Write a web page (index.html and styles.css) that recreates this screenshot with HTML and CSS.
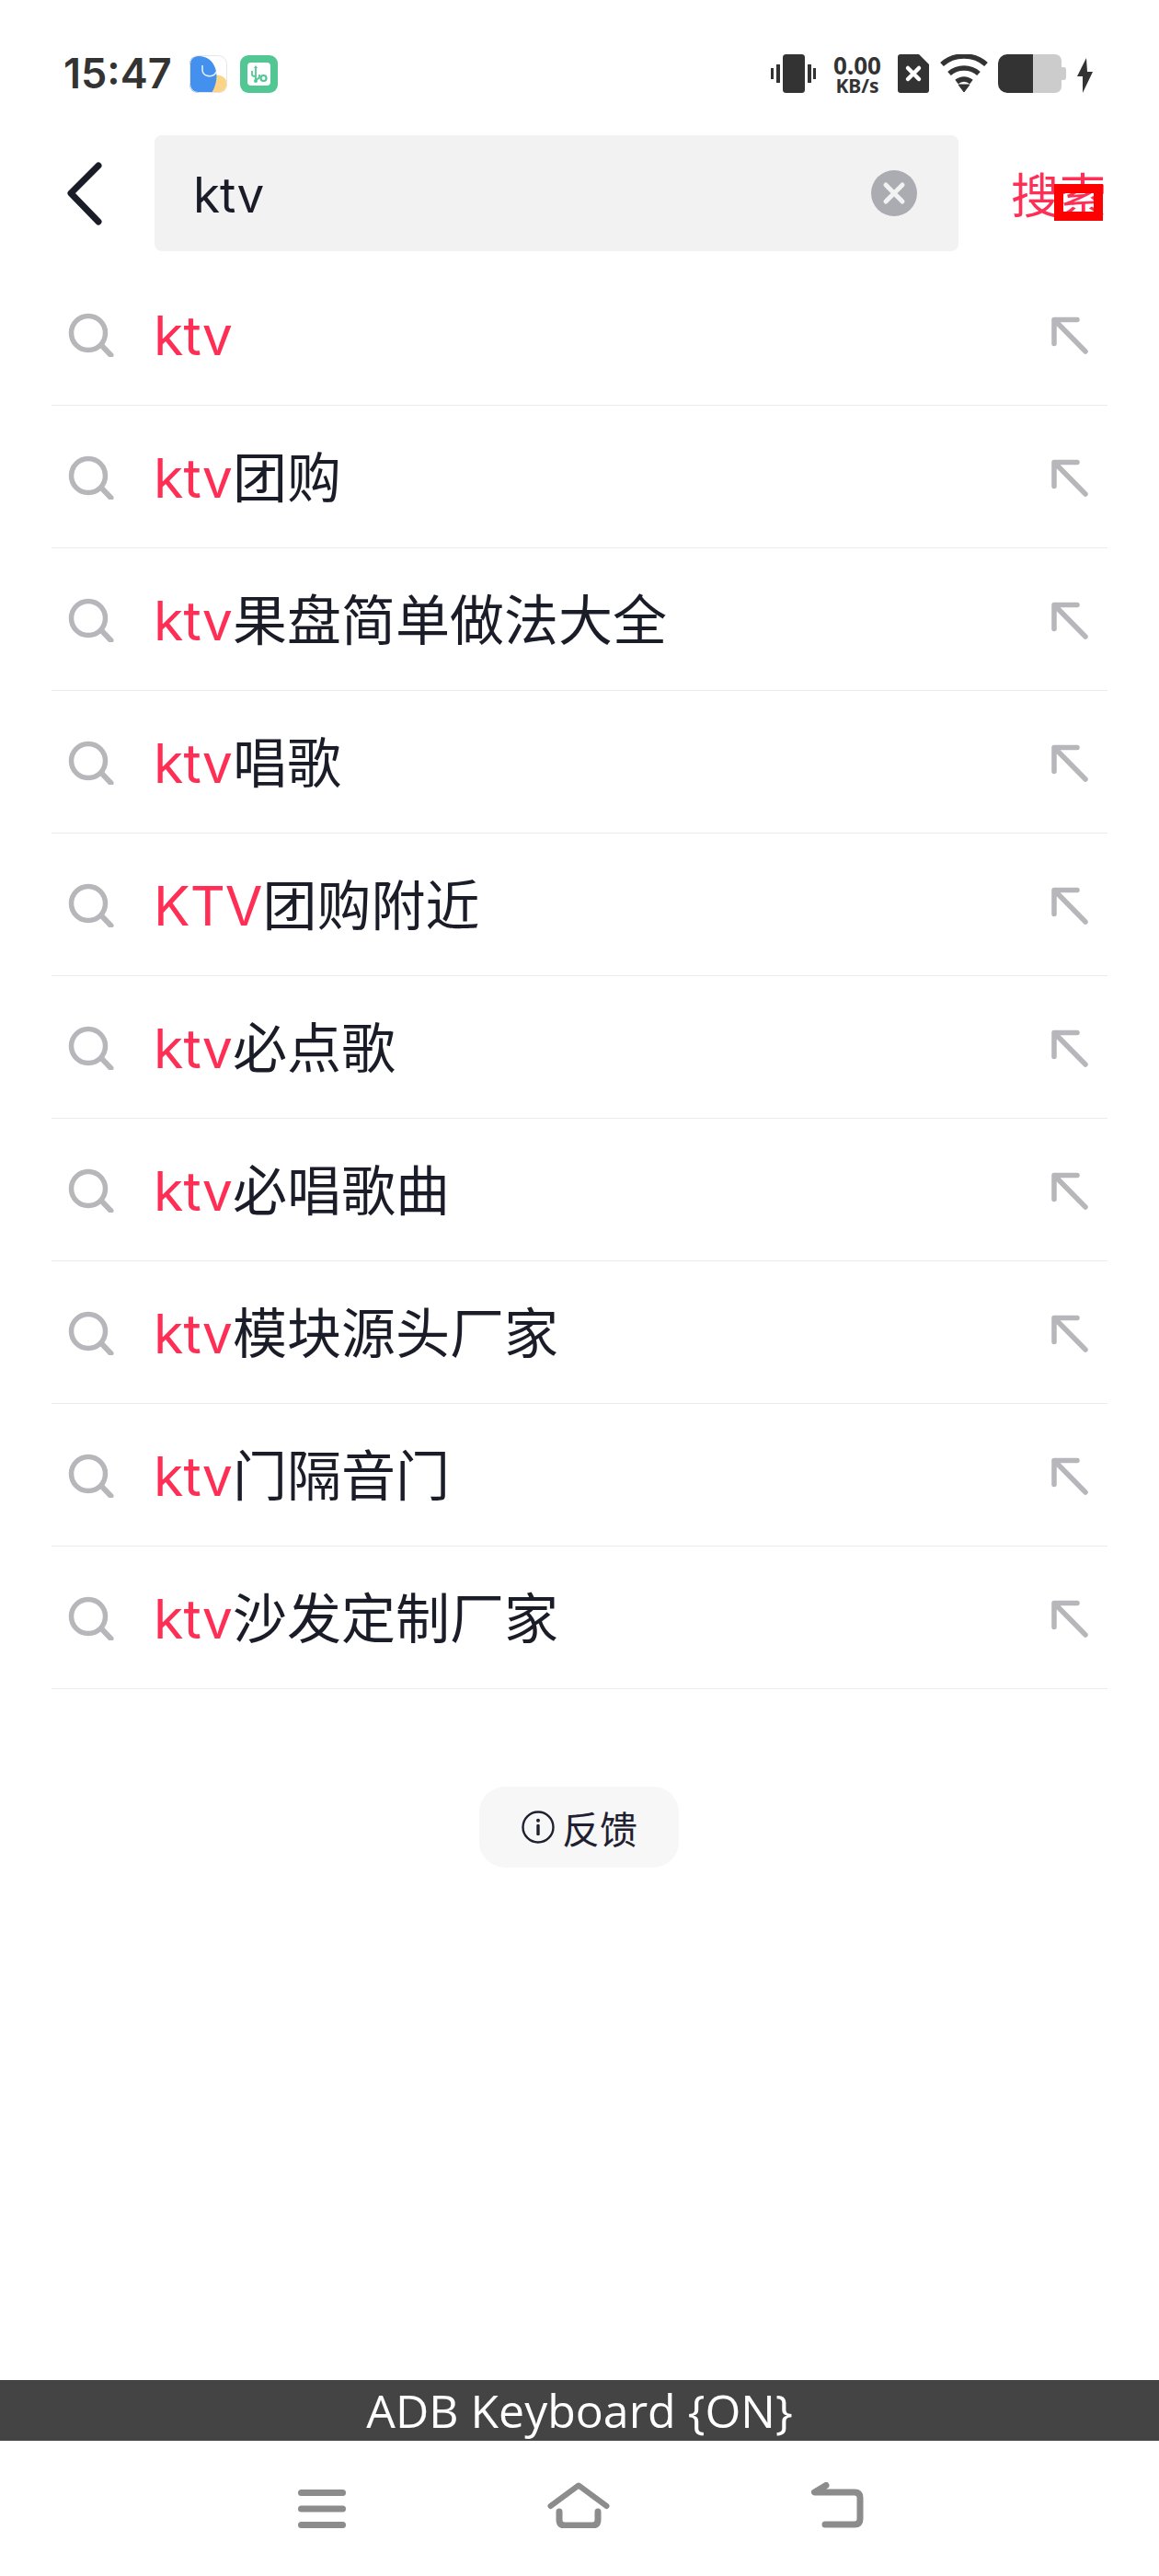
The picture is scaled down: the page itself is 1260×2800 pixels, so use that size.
FILE: index.html
```html
<!DOCTYPE html>
<html lang="zh-CN">
<head>
<meta charset="utf-8">
<title>搜索</title>
<link rel="stylesheet" href="styles.css">
</head>
<body>
<svg class="defs" width="0" height="0" aria-hidden="true">
  <symbol id="s" viewBox="0 0 50 50"><circle cx="22" cy="24" r="18.500" fill="none" stroke="#b6b6bb" stroke-width="5.500"/><path d="M37 38l9.500 10" stroke="#b6b6bb" stroke-width="6" stroke-linecap="round"/></symbol>
  <symbol id="a" viewBox="0 0 46 46"><path d="M6 33.500V7.500h25M7 8.500l33 33.500" fill="none" stroke="#b6b6bb" stroke-width="5.500" stroke-linecap="round" stroke-linejoin="round"/></symbol>
</svg>
<div class="page">
  <div class="status">
    <div class="status-left">
      <span class="time">15:47</span>
      <svg class="app-ico" width="41" height="41" viewBox="0 0 41 41"><defs><clipPath id="c1"><rect width="41" height="41" rx="9"/></clipPath></defs><g clip-path="url(#c1)"><rect width="41" height="41" fill="#fff"/><path d="M25 22c8-2 16 2 16 10v9H20z" fill="#fbd488"/><path d="M0 9C0 3 4 1 10 1c9 0 15 5 18 13 3 9 1 19-4 27H8c-5 0-8-3-8-8z" fill="#4390ee"/><path d="M14 11v5c0 8 13 9 15 2" fill="none" stroke="#e4effb" stroke-width="1.600"/></g><rect x=".5" y=".5" width="40" height="40" rx="9" fill="none" stroke="#e6e6e6"/></svg>
      <svg class="app-ico" width="41" height="41" viewBox="0 0 41 41"><rect width="41" height="41" rx="9" fill="#52c793"/><rect x="8" y="8" width="25" height="25" rx="4" fill="#fff"/><path d="M17 13v15M13 17v4q0 2 4 2M17 26q4 0 4-3v-2" fill="none" stroke="#52c793" stroke-width="1.800"/><path d="M17 11l-2 3h4z" fill="#52c793"/><circle cx="17" cy="28" r="2" fill="#52c793"/><circle cx="25.500" cy="25" r="3" fill="none" stroke="#52c793" stroke-width="2.200"/></svg>
    </div>
    <div class="status-right">
      <svg width="50" height="42" viewBox="0 0 50 42"><rect x="13" y="0" width="24" height="42" rx="3.500" fill="#333"/><rect x="6" y="11" width="4" height="20" fill="#333"/><rect x="0" y="15" width="3" height="12" fill="#333"/><rect x="40" y="11" width="4" height="20" fill="#333"/><rect x="46" y="15" width="3" height="12" fill="#333"/></svg>
      <div class="speed"><span class="speed-num">0.00</span><span class="speed-unit">KB/s</span></div>
      <svg width="34" height="42" viewBox="0 0 34 42"><path d="M3 0h20l11 11v28a3 3 0 0 1-3 3H3a3 3 0 0 1-3-3V3a3 3 0 0 1 3-3z" fill="#333"/><path d="M11 15l12 12M23 15L11 27" stroke="#fff" stroke-width="4.500" stroke-linecap="round"/></svg>
      <svg width="52" height="42" viewBox="0 0 52 42"><path d="M2 11C15-1 37-1 50 11" fill="none" stroke="#333" stroke-width="5.500"/><path d="M10 21c9-8 23-8 32 0" fill="none" stroke="#333" stroke-width="5.500"/><path d="M18 30c5-4 11-4 16 0" fill="none" stroke="#333" stroke-width="5.500"/><path d="M20 33h12l-6 8z" fill="#333" stroke="#333" stroke-linejoin="round"/></svg>
      <svg width="74" height="42" viewBox="0 0 74 42"><path d="M38 0h24a7 7 0 0 1 7 7v28a7 7 0 0 1-7 7H38z" fill="#ccc"/><path d="M69 14h2a3 3 0 0 1 3 3v8a3 3 0 0 1-3 3h-2z" fill="#ccc"/><path d="M38 0H10A10 10 0 0 0 0 10v22a10 10 0 0 0 10 10h28z" fill="#333"/></svg>
      <svg width="17" height="38" viewBox="0 0 17 38"><path d="M10 0L0 20h6L6 38 17 15h-6z" fill="#333"/></svg>
    </div>
  </div>

  <div class="header">
    <svg class="back" width="40" height="70" viewBox="0 0 40 70"><path d="M35 5L5 35l30 31" fill="none" stroke="#1a1c28" stroke-width="7" stroke-linecap="round" stroke-linejoin="round"/></svg>
    <div class="search-box">
      <span class="query">ktv</span>
      <svg width="50" height="50" viewBox="0 0 50 50"><circle cx="25" cy="25" r="25" fill="#abacb1"/><path d="M16 16l18 18M34 16L16 34" stroke="#f2f2f3" stroke-width="5" stroke-linecap="round"/></svg>
    </div>
    <div class="search-btn">搜索<span class="glitch"></span></div>
  </div>

  <ul class="list">
    <li class="row"><svg class="ico-s" width="50" height="50"><use href="#s"/></svg><span class="txt"><em>ktv</em></span><svg class="ico-a" width="46" height="46"><use href="#a"/></svg></li>
    <li class="row"><svg class="ico-s" width="50" height="50"><use href="#s"/></svg><span class="txt"><em>ktv</em>团购</span><svg class="ico-a" width="46" height="46"><use href="#a"/></svg></li>
    <li class="row"><svg class="ico-s" width="50" height="50"><use href="#s"/></svg><span class="txt"><em>ktv</em>果盘简单做法大全</span><svg class="ico-a" width="46" height="46"><use href="#a"/></svg></li>
    <li class="row"><svg class="ico-s" width="50" height="50"><use href="#s"/></svg><span class="txt"><em>ktv</em>唱歌</span><svg class="ico-a" width="46" height="46"><use href="#a"/></svg></li>
    <li class="row"><svg class="ico-s" width="50" height="50"><use href="#s"/></svg><span class="txt"><em>KTV</em>团购附近</span><svg class="ico-a" width="46" height="46"><use href="#a"/></svg></li>
    <li class="row"><svg class="ico-s" width="50" height="50"><use href="#s"/></svg><span class="txt"><em>ktv</em>必点歌</span><svg class="ico-a" width="46" height="46"><use href="#a"/></svg></li>
    <li class="row"><svg class="ico-s" width="50" height="50"><use href="#s"/></svg><span class="txt"><em>ktv</em>必唱歌曲</span><svg class="ico-a" width="46" height="46"><use href="#a"/></svg></li>
    <li class="row"><svg class="ico-s" width="50" height="50"><use href="#s"/></svg><span class="txt"><em>ktv</em>模块源头厂家</span><svg class="ico-a" width="46" height="46"><use href="#a"/></svg></li>
    <li class="row"><svg class="ico-s" width="50" height="50"><use href="#s"/></svg><span class="txt"><em>ktv</em>门隔音门</span><svg class="ico-a" width="46" height="46"><use href="#a"/></svg></li>
    <li class="row"><svg class="ico-s" width="50" height="50"><use href="#s"/></svg><span class="txt"><em>ktv</em>沙发定制厂家</span><svg class="ico-a" width="46" height="46"><use href="#a"/></svg></li>
  </ul>

  <div class="feedback-wrap">
    <div class="feedback">
      <svg width="36" height="36" viewBox="0 0 36 36"><circle cx="18" cy="18" r="16.500" fill="none" stroke="#1f2130" stroke-width="2.400"/><rect x="16.300" y="15" width="3.400" height="12" rx="1" fill="#1f2130"/><circle cx="18" cy="10.800" r="2" fill="#1f2130"/></svg>
      <span>反馈</span>
    </div>
  </div>

  <div class="spacer"></div>
  <div class="adb">ADB Keyboard {ON}</div>
  <div class="nav">
    <svg class="nav-menu" width="52" height="42" viewBox="0 0 52 42"><rect width="52" height="7" y="0" rx="3.500" fill="#8c8c8c"/><rect width="52" height="7" y="17.500" rx="3.500" fill="#8c8c8c"/><rect width="52" height="7" y="35" rx="3.500" fill="#8c8c8c"/></svg>
    <svg width="68" height="50" viewBox="0 0 68 50"><path d="M3.500 26L34 3.500 64.500 26" fill="none" stroke="#8c8c8c" stroke-width="6" stroke-linecap="round" stroke-linejoin="round"/><path d="M13 32v9q0 6 6 6h30q6 0 6-6v-9" fill="none" stroke="#8c8c8c" stroke-width="7" stroke-linecap="round"/></svg>
    <svg width="57" height="50" viewBox="0 0 57 50"><path d="M16 3.500L3.500 11H47q6 0 6 6v23q0 6-6 6H15" fill="none" stroke="#8c8c8c" stroke-width="7" stroke-linecap="round" stroke-linejoin="round"/></svg>
  </div>
</div>
</body>
</html>
```
FILE: styles.css
```css
* { box-sizing: border-box; }
html, body { margin: 0; padding: 0; background: #fff; }
body { font-family: "Noto Sans", "Noto Sans CJK SC", sans-serif; }
.defs { position: absolute; }
.page { width: 1260px; height: 2800px; display: flex; flex-direction: column; overflow: hidden; }

.status { height: 147px; padding: 59px 72px 0 69px; display: flex; justify-content: space-between; align-items: flex-start; flex-shrink: 0; }
.status svg { display: block; flex-shrink: 0; }
.status-left { display: flex; align-items: center; height: 42px; }
.time { font-family: Inter, "Noto Sans", sans-serif; font-size: 45px; font-weight: 600; color: #333; line-height: 42px; width: 137px; }
.app-ico { margin-right: 14px; }
.status-right { display: flex; align-items: flex-start; height: 42px; }
.status-right > svg:nth-child(1) { margin-right: 16px; }
.speed { width: 56px; margin-right: 16px; display: flex; flex-direction: column; align-items: center; color: #333; font-family: "Noto Sans", sans-serif; font-weight: 700; }
.speed-num { font-size: 26px; line-height: 24px; }
.speed-unit { font-size: 21px; line-height: 20px; }
.status-right > svg:nth-child(3) { margin-right: 12px; }
.status-right > svg:nth-child(4) { margin-right: 11px; }
.status-right > svg:nth-child(5) { margin-right: 12px; }
.status-right > svg:nth-child(6) { margin-top: 4px; }

.header { height: 126px; display: flex; align-items: center; flex-shrink: 0; }
.back { display: block; margin-left: 72px; margin-right: 56px; flex-shrink: 0; }
.search-box { width: 874px; height: 126px; background: #f2f2f3; border-radius: 8px; display: flex; align-items: center; justify-content: space-between; padding: 0 45px 0 42px; }
.search-box svg { display: block; }
.query { font-family: Inter, "Noto Sans", sans-serif; font-size: 53px; color: #1a1c28; line-height: 126px; padding-top: 3px; }
.search-btn { position: relative; margin-left: 57px; font-family: "Noto Sans CJK SC", sans-serif; font-size: 52px; line-height: 60px; color: #ff2e55; white-space: nowrap; }
.glitch { position: absolute; left: 47px; top: 20px; width: 53px; height: 40px; border: 10px solid #f00; }

.list { list-style: none; margin: 13px 0 0; padding: 0 56px; flex-shrink: 0; }
.row { height: 155px; border-bottom: 1px solid #ececee; display: flex; align-items: center; }
.ico-s { display: block; margin-left: 18px; margin-right: 43px; flex-shrink: 0; }
.txt { flex: 1; font-size: 59px; line-height: 80px; padding-top: 4px; color: #1a1c28; font-family: Inter, "Noto Sans CJK SC", sans-serif; white-space: nowrap; }
.txt em { font-style: normal; color: #ff2e55; }
.ico-a { display: block; margin-right: 18px; flex-shrink: 0; }

.feedback-wrap { display: flex; justify-content: center; margin-top: 106px; padding-right: 2px; flex-shrink: 0; }
.feedback { width: 217px; height: 88px; padding-left: 2px; border-radius: 28px; background: #f7f7f8; display: flex; align-items: center; justify-content: center; gap: 8px; color: #1f2130; font-family: "Noto Sans CJK SC", sans-serif; font-size: 41px; }
.feedback svg { display: block; }

.spacer { flex: 1; }
.adb { height: 66px; background: #444; color: #fff; font-family: "Open Sans", "Noto Sans", sans-serif; font-size: 50px; line-height: 66px; text-align: center; flex-shrink: 0; }
.nav { height: 147px; flex-shrink: 0; display: flex; justify-content: space-between; align-items: flex-start; padding: 45px 321px 0 324px; }
.nav svg { display: block; }
.nav .nav-menu { margin-top: 8px; }
```
